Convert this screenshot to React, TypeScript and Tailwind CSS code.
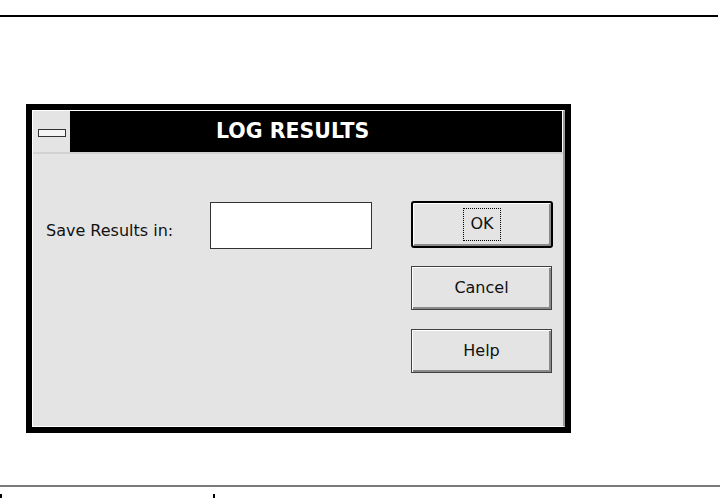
import React from 'react';

const font = { fontFamily: '"DejaVu Sans", Verdana, sans-serif' };

interface DialogButtonProps {
  label: string;
  isDefault?: boolean;
  className?: string;
}

// Motif-style push button; the default one gets a black ring and a dotted focus box
const DialogButton: React.FC<DialogButtonProps> = ({ label, isDefault, className = '' }) => {
  if (isDefault) {
    return (
      <div className={`w-[142px] h-[47px] border-2 border-black rounded-[3px] bg-[#e4e4e4] shadow-[inset_1px_1px_0_#ffffff,inset_-2px_-2px_0_#8a8a8a] flex items-center justify-center ${className}`}>
        <span className="w-[38px] h-[33px] border border-dotted border-black flex items-center justify-center text-[16px] text-[#111]">
          {label}
        </span>
      </div>
    );
  }
  return (
    <div className={`w-[141px] h-[44px] border border-[#404040] bg-[#e4e4e4] shadow-[inset_1px_1px_0_#ffffff,inset_-2px_-2px_0_#8a8a8a] flex items-center justify-center text-[16px] text-[#111] ${className}`}>
      {label}
    </div>
  );
};

const App: React.FC = () => {
  return (
    <div className="w-[720px] h-[498px] bg-white flex flex-col overflow-hidden" style={font}>
      <div className="mt-[15px] w-[718px] h-[2px] bg-black" />

      {/* dialog window */}
      <div className="mt-[87px] ml-[26px] w-[545px] h-[331px] border-[6px] border-black bg-[#e4e4e4] flex flex-col">
        <div className="flex-1 flex flex-col border-t border-l border-b border-white border-r-2 border-r-[#9a9a9a]">
          {/* title bar */}
          <div className="h-[43px] flex border-b-2 border-[#d2d2d2]">
            <div className="w-[37px] bg-[#e4e4e4] flex items-center justify-center">
              <div className="w-[28px] h-[8px] mt-[3px] border border-[#333] bg-[#f4f4f4]" />
            </div>
            <div className="flex-1 bg-black flex items-center pl-[146px] border-r border-white">
              <span className="text-white font-bold text-[20.5px] leading-none">LOG RESULTS</span>
            </div>
          </div>

          {/* body */}
          <div className="flex-1 flex pt-[47px]">
            <div className="w-[378px] flex items-start">
              <span className="ml-[13px] mt-[18px] w-[164px] text-[16px] text-[#111]">Save Results in:</span>
              <div className="w-[162px] h-[47px] mt-[1px] border border-[#333] bg-white" />
            </div>
            <div className="flex flex-col">
              <DialogButton label="OK" isDefault />
              <DialogButton label="Cancel" className="mt-[18px]" />
              <DialogButton label="Help" className="mt-[19px]" />
            </div>
          </div>
        </div>
      </div>

      <div className="mt-[52px] w-[720px] h-[2px] bg-[#7a7a7a]" />
      <div className="mt-[7px] flex">
        <div className="w-[2px] h-[4px] bg-black" />
        <div className="ml-[211px] w-[2px] h-[4px] bg-black" />
      </div>
    </div>
  );
};

export default App;
